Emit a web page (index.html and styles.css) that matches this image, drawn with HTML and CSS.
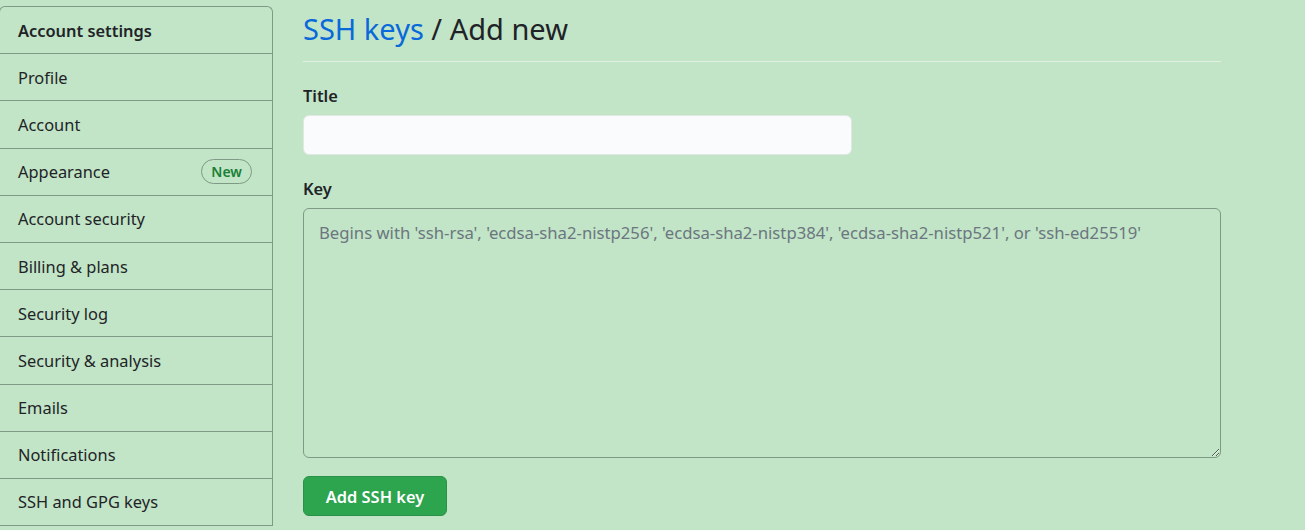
FILE: index.html
```html
<!DOCTYPE html>
<html lang="en">
<head>
<meta charset="utf-8">
<title>SSH keys / Add new</title>
<link rel="stylesheet" href="styles.css">
</head>
<body>
<div class="layout">
  <nav class="menu">
    <div class="menu-heading">Account settings</div>
    <a class="menu-item" href="#">Profile</a>
    <a class="menu-item" href="#">Account</a>
    <a class="menu-item" href="#">Appearance <span class="badge">New</span></a>
    <a class="menu-item" href="#">Account security</a>
    <a class="menu-item" href="#">Billing &amp; plans</a>
    <a class="menu-item" href="#">Security log</a>
    <a class="menu-item" href="#">Security &amp; analysis</a>
    <a class="menu-item" href="#">Emails</a>
    <a class="menu-item" href="#">Notifications</a>
    <a class="menu-item" href="#">SSH and GPG keys</a>
  </nav>
  <main class="main">
    <div class="subhead">
      <h2 class="subhead-heading"><a href="#" class="link">SSH keys</a> / Add new</h2>
    </div>
    <form class="form">
      <div class="form-group">
        <label class="label" for="title">Title</label>
        <input class="input" id="title" type="text">
      </div>
      <div class="form-group form-group-key">
        <label class="label" for="key">Key</label>
        <textarea class="textarea" id="key" placeholder="Begins with 'ssh-rsa', 'ecdsa-sha2-nistp256', 'ecdsa-sha2-nistp384', 'ecdsa-sha2-nistp521', or 'ssh-ed25519'"></textarea>
      </div>
      <button class="btn-primary" type="button">Add SSH key</button>
    </form>
  </main>
</div>
</body>
</html>
```
FILE: styles.css
```css
html, body {
  margin: 0;
  padding: 0;
  background: #c1e5c6;
  color: #1f2328;
  font-family: "Noto Sans", "Open Sans", sans-serif;
  font-size: 16px;
}

.layout {
  display: flex;
  align-items: flex-start;
  padding-top: 6px;
}

.menu {
  box-sizing: border-box;
  width: 274px;
  margin-left: -1px;
  border: 1px solid #7f9a84;
  border-bottom: none;
  border-radius: 6px 6px 0 0;
  display: flex;
  flex-direction: column;
  flex-shrink: 0;
}

.menu-heading,
.menu-item {
  display: flex;
  align-items: center;
  justify-content: space-between;
  height: 46.2px;
  padding: 0 20px 0 18px;
  border-bottom: 1px solid #7f9a84;
  font-size: 16.4px;
  color: #1f2328;
  text-decoration: none;
}

.menu-heading {
  font-weight: 600;
}

.badge {
  display: inline-flex;
  align-items: center;
  height: 23px;
  padding: 0 9px;
  border: 1px solid #7f9a84;
  border-radius: 13px;
  font-size: 14px;
  font-weight: 600;
  color: #1a7f37;
}

.main {
  width: 918px;
  margin-left: 30px;
}

.subhead {
  border-bottom: 1px solid #e3efe3;
  padding: 4px 0 13px;
  margin-bottom: 22px;
}

.subhead-heading {
  margin: 0;
  font-size: 29px;
  font-weight: 400;
  line-height: 38px;
  color: #1f2328;
}

.link {
  color: #0969da;
  text-decoration: none;
}

.form-group {
  display: flex;
  flex-direction: column;
  margin-bottom: 22px;
}

.form-group-key {
  margin-bottom: 18px;
}

.label {
  font-weight: 600;
  font-size: 16.4px;
  line-height: 24px;
  margin-bottom: 7px;
}

.input {
  width: 549px;
  height: 40px;
  box-sizing: border-box;
  background: #fafbfd;
  border: 1px solid #dfe8e1;
  border-radius: 6px;
  font: inherit;
}

.textarea {
  width: 918px;
  height: 250px;
  box-sizing: border-box;
  background: transparent;
  border: 1px solid #7f9a84;
  border-radius: 6px;
  padding: 12px 15px;
  font-family: "Noto Sans", "Open Sans", sans-serif;
  font-size: 16.7px;
  line-height: 24px;
  color: #1f2328;
}

.textarea::placeholder {
  color: #6c7680;
}

.btn-primary {
  width: 144px;
  height: 40px;
  background: #2da44e;
  border: 1px solid #2a9147;
  border-radius: 6px;
  color: #fff;
  font-family: "Noto Sans", "Open Sans", sans-serif;
  font-weight: 600;
  font-size: 16.4px;
  padding: 0;
}
```
